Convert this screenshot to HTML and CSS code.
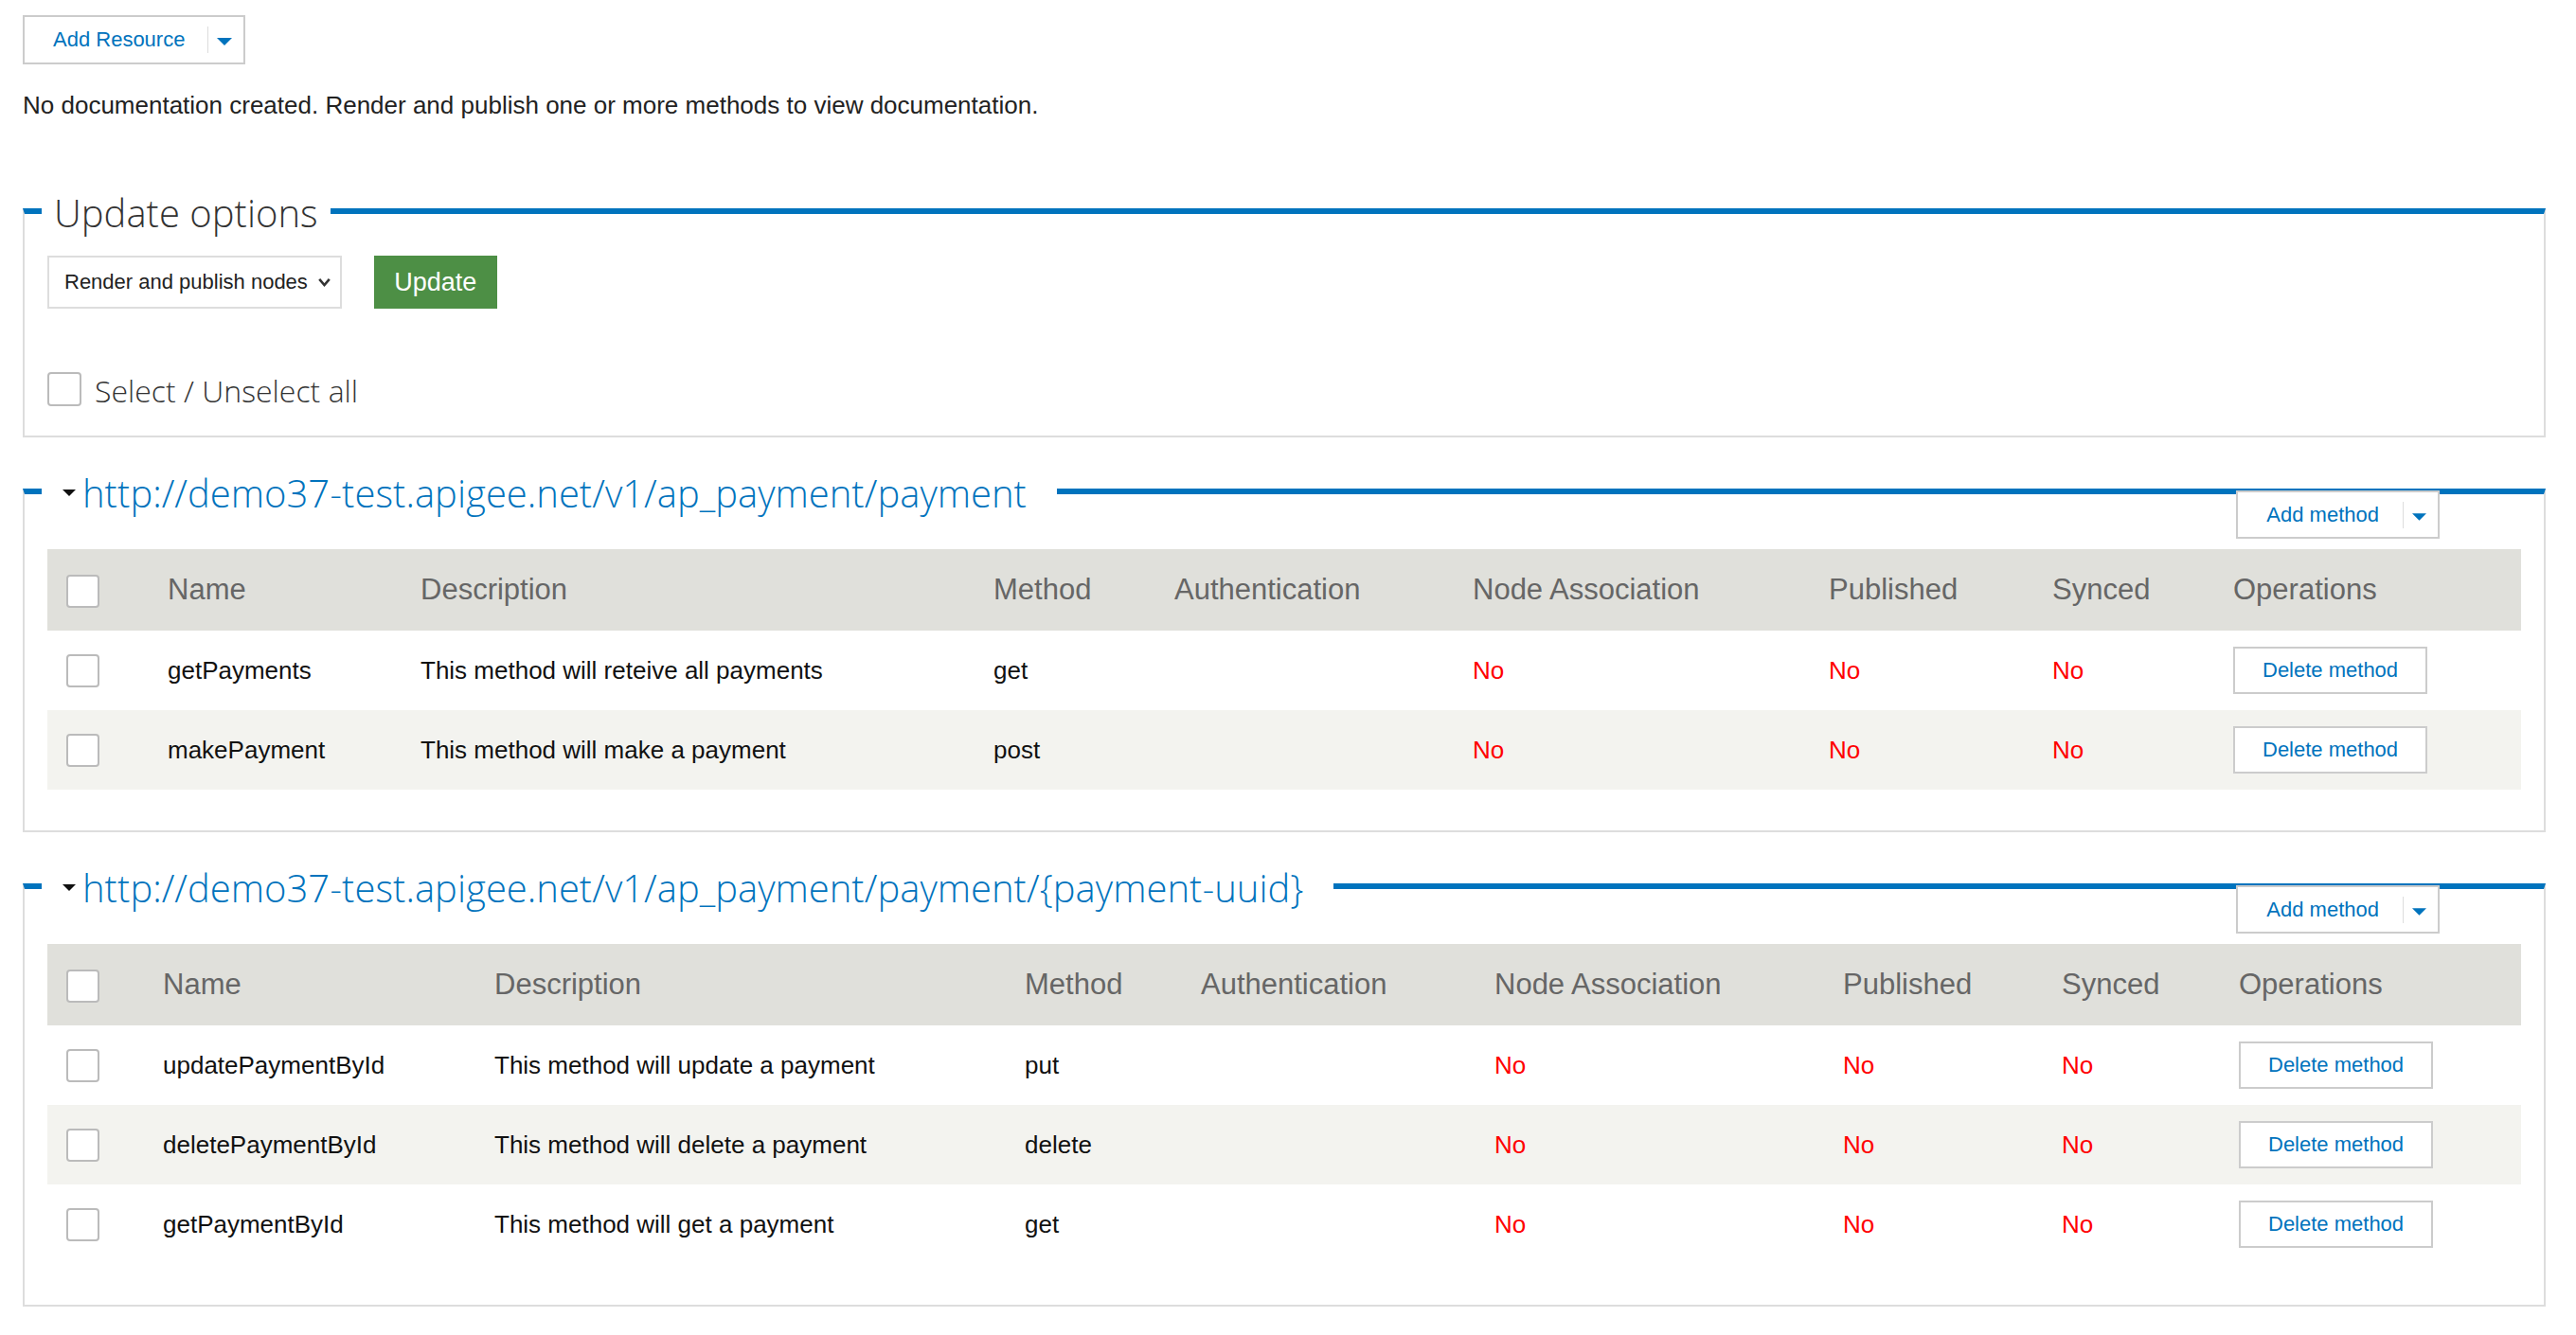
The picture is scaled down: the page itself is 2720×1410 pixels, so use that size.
FILE: index.html
```html
<!DOCTYPE html>
<html lang="en">
<head>
<meta charset="utf-8">
<title>Resources</title>
<link rel="stylesheet" href="styles.css">
</head>
<body>
<div class="page">
  <div class="split-btn">
    <span class="split-label">Add Resource</span>
    <span class="split-sep"></span>
    <svg class="split-caret" viewBox="0 0 16 8"><path d="M0 0H16L8 8Z"/></svg>
  </div>

  <p class="note">No documentation created. Render and publish one or more methods to view documentation.</p>

  <fieldset class="panel panel-options">
    <legend class="panel-title">Update options</legend>
    <div class="options-row">
      <div class="select">
        <span>Render and publish nodes</span>
        <svg class="chevron" viewBox="0 0 13 10"><polyline points="1.2,1.8 6.5,8 11.8,1.8"/></svg>
      </div>
      <button class="btn-update" type="button">Update</button>
    </div>
    <div class="select-all">
      <span class="checkbox checkbox-lg"></span>
      <span>Select / Unselect all</span>
    </div>
  </fieldset>

  <fieldset class="panel">
    <legend class="panel-title resource-title">
      <svg class="toggle" viewBox="0 0 14 7"><path d="M0 0H14L7 7Z"/></svg><a class="resource-link" href="#">http://demo37-test.apigee.net/v1/ap_payment/payment</a>
    </legend>
    <div class="panel-body">
      <div class="split-btn add-method">
        <span class="split-label">Add method</span>
        <span class="split-sep"></span>
        <svg class="split-caret" viewBox="0 0 16 8"><path d="M0 0H16L8 8Z"/></svg>
      </div>
      <table class="methods methods-a">
        <thead>
          <tr>
            <th><span class="checkbox"></span></th>
            <th>Name</th>
            <th>Description</th>
            <th>Method</th>
            <th>Authentication</th>
            <th>Node Association</th>
            <th>Published</th>
            <th>Synced</th>
            <th>Operations</th>
          </tr>
        </thead>
        <tbody>
          <tr>
            <td><span class="checkbox"></span></td>
            <td>getPayments</td>
            <td>This method will reteive all payments</td>
            <td>get</td>
            <td></td>
            <td class="no">No</td>
            <td class="no">No</td>
            <td class="no">No</td>
            <td><button class="btn-delete" type="button">Delete method</button></td>
          </tr>
          <tr>
            <td><span class="checkbox"></span></td>
            <td>makePayment</td>
            <td>This method will make a payment</td>
            <td>post</td>
            <td></td>
            <td class="no">No</td>
            <td class="no">No</td>
            <td class="no">No</td>
            <td><button class="btn-delete" type="button">Delete method</button></td>
          </tr>
        </tbody>
      </table>
    </div>
  </fieldset>

  <fieldset class="panel">
    <legend class="panel-title resource-title">
      <svg class="toggle" viewBox="0 0 14 7"><path d="M0 0H14L7 7Z"/></svg><a class="resource-link" href="#">http://demo37-test.apigee.net/v1/ap_payment/payment/{payment-uuid}</a>
    </legend>
    <div class="panel-body">
      <div class="split-btn add-method">
        <span class="split-label">Add method</span>
        <span class="split-sep"></span>
        <svg class="split-caret" viewBox="0 0 16 8"><path d="M0 0H16L8 8Z"/></svg>
      </div>
      <table class="methods methods-b">
        <thead>
          <tr>
            <th><span class="checkbox"></span></th>
            <th>Name</th>
            <th>Description</th>
            <th>Method</th>
            <th>Authentication</th>
            <th>Node Association</th>
            <th>Published</th>
            <th>Synced</th>
            <th>Operations</th>
          </tr>
        </thead>
        <tbody>
          <tr>
            <td><span class="checkbox"></span></td>
            <td>updatePaymentById</td>
            <td>This method will update a payment</td>
            <td>put</td>
            <td></td>
            <td class="no">No</td>
            <td class="no">No</td>
            <td class="no">No</td>
            <td><button class="btn-delete" type="button">Delete method</button></td>
          </tr>
          <tr>
            <td><span class="checkbox"></span></td>
            <td>deletePaymentById</td>
            <td>This method will delete a payment</td>
            <td>delete</td>
            <td></td>
            <td class="no">No</td>
            <td class="no">No</td>
            <td class="no">No</td>
            <td><button class="btn-delete" type="button">Delete method</button></td>
          </tr>
          <tr>
            <td><span class="checkbox"></span></td>
            <td>getPaymentById</td>
            <td>This method will get a payment</td>
            <td>get</td>
            <td></td>
            <td class="no">No</td>
            <td class="no">No</td>
            <td class="no">No</td>
            <td><button class="btn-delete" type="button">Delete method</button></td>
          </tr>
        </tbody>
      </table>
    </div>
  </fieldset>
</div>
</body>
</html>
```

FILE: styles.css
```css
* {
  box-sizing: border-box;
}

html,
body {
  margin: 0;
  background: #ffffff;
}

body {
  font-family: "Liberation Sans", Arial, Helvetica, sans-serif;
  color: #222222;
}

.page {
  padding: 16px 32px 30px 24px;
}

/* split buttons (Add Resource / Add method) */
.split-btn {
  display: inline-flex;
  align-items: center;
  height: 52px;
  padding: 0 12px 0 30px;
  border: 2px solid #cccccc;
  background: #ffffff;
  color: #0073bd;
  font-size: 22px;
  line-height: 1;
}

.split-sep {
  width: 1px;
  height: 28px;
  background: #dddddd;
  margin: 0 9px 0 24px;
}

.split-caret {
  width: 16px;
  height: 8px;
  fill: #0073bd;
  margin-top: 4px;
}

.add-method {
  position: absolute;
  top: -30px;
  right: 86px;
  height: 51px;
}

.add-method .split-sep {
  margin-left: 25px;
}

.add-method .split-caret {
  width: 15px;
}

.note {
  margin: 28px 0 0;
  font-size: 26px;
  line-height: 30px;
  color: #222222;
}

/* panels */
.panel {
  margin: 28px 0 0;
  padding: 0 24px 43px;
  border: 2px solid #dddddd;
  border-top: 6px solid #0073bd;
  min-width: 0;
}

.panel-options {
  margin-top: 68px;
  padding-bottom: 24px;
}

.panel-title {
  margin-left: -6px;
  padding: 4px 13px 0;
  font-family: "Open Sans Light", "Open Sans", "Liberation Sans", sans-serif;
  font-weight: 300;
  font-size: 40px;
  line-height: 54px;
  color: #333333;
}

.resource-title {
  padding: 4px 32px 0 22px;
}

.toggle {
  width: 14px;
  height: 7px;
  fill: #111111;
  margin-right: 7px;
  vertical-align: 12px;
}

.resource-link {
  color: #0073bd;
  text-decoration: none;
}

.options-row {
  display: flex;
  align-items: stretch;
  gap: 34px;
  margin-top: 18px;
  height: 56px;
}

.select {
  display: inline-flex;
  align-items: center;
  gap: 11px;
  padding: 0 10px 0 16px;
  border: 2px solid #dddddd;
  background: #ffffff;
  font-size: 22px;
  color: #222222;
}

.chevron {
  width: 13px;
  height: 10px;
  fill: none;
  stroke: #333333;
  stroke-width: 2.6;
}

.btn-update {
  width: 130px;
  border: 0;
  padding: 0;
  background: #4d8f45;
  color: #ffffff;
  font-family: "Liberation Sans", Arial, sans-serif;
  font-size: 27px;
}

.select-all {
  display: flex;
  align-items: center;
  gap: 14px;
  margin-top: 64px;
  height: 46px;
  font-family: "Open Sans Light", "Open Sans", "Liberation Sans", sans-serif;
  font-weight: 300;
  font-size: 32px;
  line-height: 46px;
  color: #333333;
}

.checkbox {
  display: inline-block;
  width: 35px;
  height: 35px;
  border: 2px solid #bbbbbb;
  border-radius: 4px;
  background: #ffffff;
  vertical-align: middle;
}

.checkbox-lg {
  width: 36px;
  height: 36px;
  margin-top: -4px;
}

/* tables */
.panel-body {
  position: relative;
  padding-top: 32px;
}

.methods {
  width: 100%;
  border-collapse: collapse;
  table-layout: fixed;
}

.methods th,
.methods td {
  padding: 0 20px;
  text-align: left;
  vertical-align: middle;
  white-space: nowrap;
}

.methods thead tr {
  height: 86px;
  background: #e0e0db;
}

.methods th {
  font-size: 31px;
  font-weight: normal;
  color: #666666;
}

.methods tbody tr {
  height: 84px;
}

.methods tbody tr:nth-child(even) {
  background: #f3f3ef;
}

.methods td {
  font-size: 26px;
  color: #111111;
}

.methods td.no {
  color: #ff0000;
}

/* column widths of the first resource table */
.methods-a th:nth-child(1) { width: 107px; }
.methods-a th:nth-child(2) { width: 267px; }
.methods-a th:nth-child(3) { width: 605px; }
.methods-a th:nth-child(4) { width: 191px; }
.methods-a th:nth-child(5) { width: 315px; }
.methods-a th:nth-child(6) { width: 376px; }
.methods-a th:nth-child(7) { width: 236px; }
.methods-a th:nth-child(8) { width: 191px; }
.methods-a th:nth-child(9) { width: 324px; }

/* column widths of the second resource table */
.methods-b th:nth-child(1) { width: 102px; }
.methods-b th:nth-child(2) { width: 350px; }
.methods-b th:nth-child(3) { width: 560px; }
.methods-b th:nth-child(4) { width: 186px; }
.methods-b th:nth-child(5) { width: 310px; }
.methods-b th:nth-child(6) { width: 368px; }
.methods-b th:nth-child(7) { width: 231px; }
.methods-b th:nth-child(8) { width: 187px; }
.methods-b th:nth-child(9) { width: 318px; }

.btn-delete {
  height: 50px;
  padding: 0 29px;
  border: 2px solid #cccccc;
  background: #ffffff;
  color: #0073bd;
  font-family: "Liberation Sans", Arial, sans-serif;
  font-size: 22px;
}
```
